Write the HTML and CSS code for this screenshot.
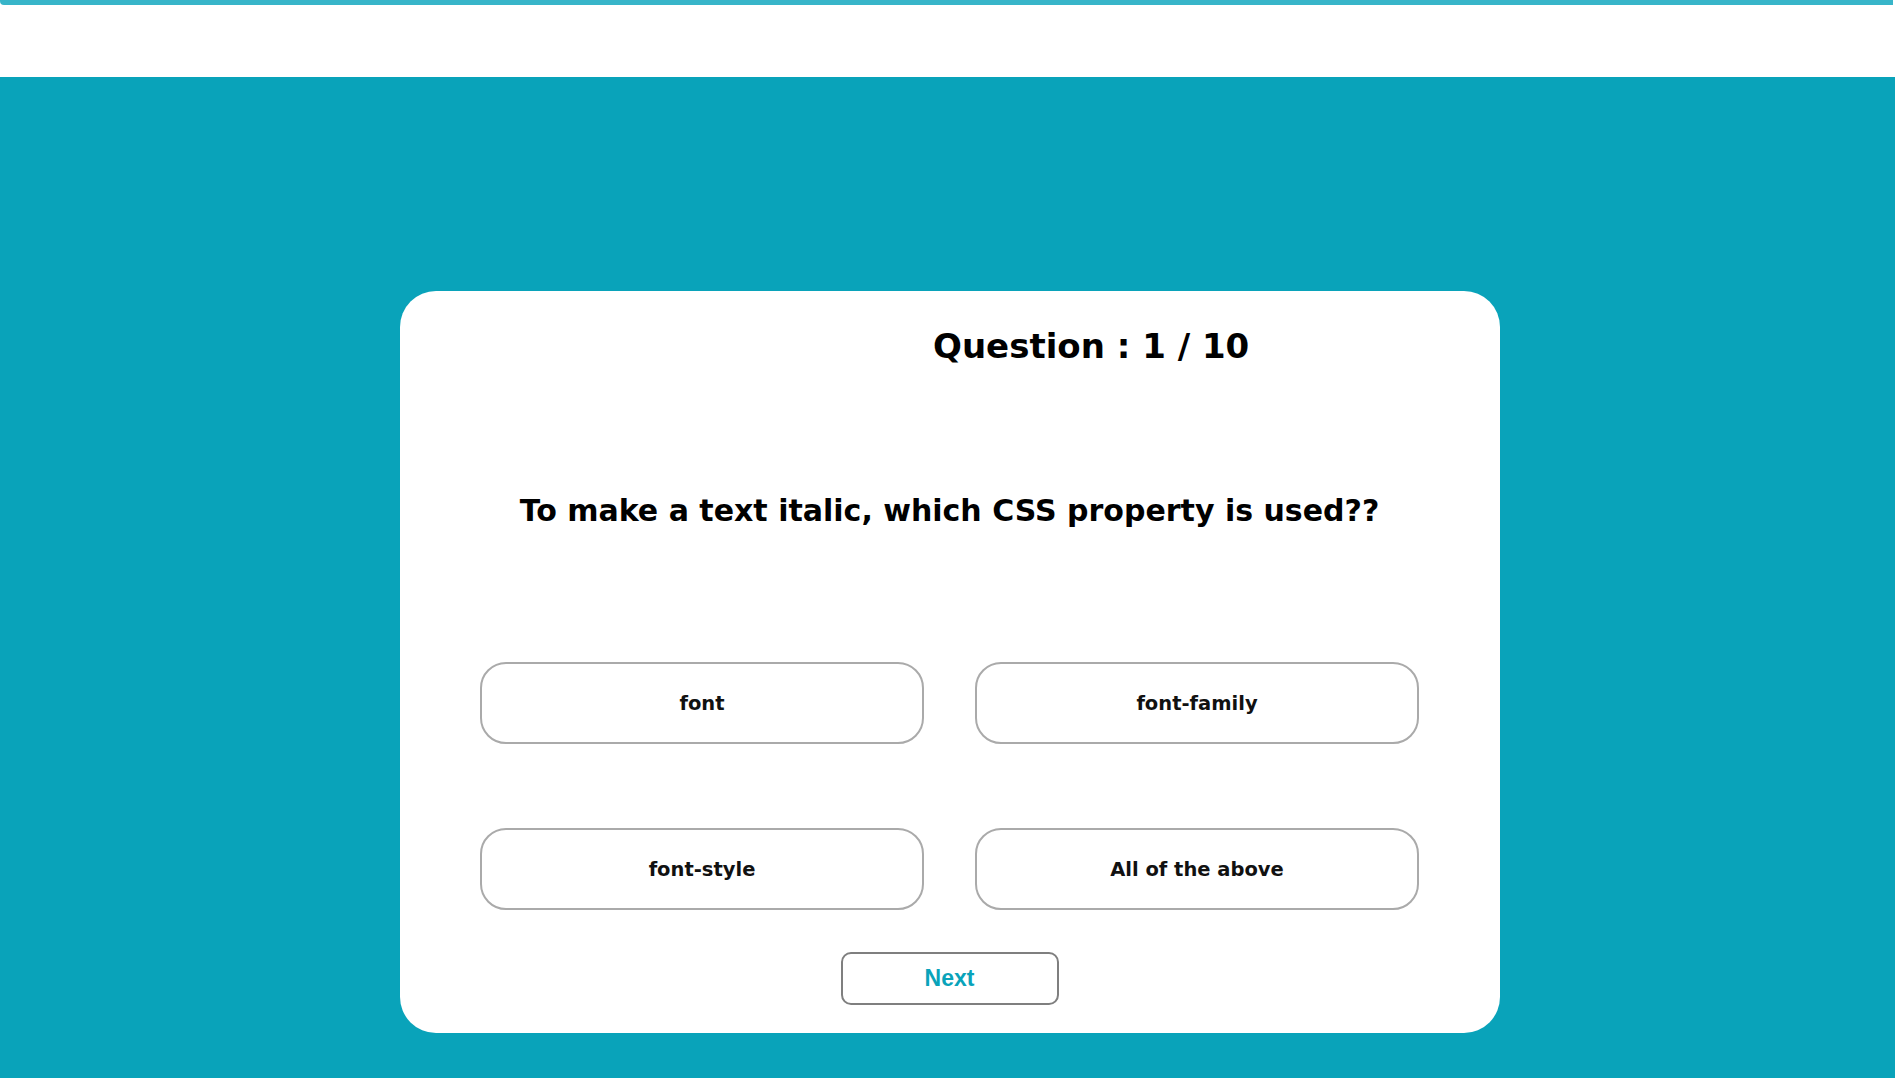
FILE: index.html
```html
<!DOCTYPE html>
<html lang="en">
<head>
<meta charset="utf-8">
<title>Quiz</title>
<link rel="stylesheet" href="styles.css">
</head>
<body>
<header class="header">
  <div class="progress"></div>
</header>
<main class="stage">
  <section class="card">
    <h2 class="counter">Question : 1 / 10</h2>
    <h1 class="question">To make a text italic, which CSS property is used??</h1>
    <div class="options">
      <button class="option">font</button>
      <button class="option">font-family</button>
      <button class="option">font-style</button>
      <button class="option">All of the above</button>
    </div>
    <div class="actions">
      <button class="next">Next</button>
    </div>
  </section>
</main>
</body>
</html>
```
FILE: styles.css
```css
html, body {
  margin: 0;
  padding: 0;
}
body {
  background: #09a3ba;
  font-family: "DejaVu Sans", Verdana, sans-serif;
  min-height: 1078px;
}
.header {
  height: 77px;
  background: #ffffff;
}
.progress {
  height: 5px;
  width: calc(100% - 2px);
  background: #38b5c9;
  border-bottom-left-radius: 4px;
}
.stage {
  padding-top: 214px;
  padding-left: 5px;
  display: flex;
  justify-content: center;
}
.card {
  width: 1100px;
  height: 742px;
  box-sizing: border-box;
  background: #ffffff;
  border-radius: 36px;
  padding: 35px 81px 28px 80px;
  display: flex;
  flex-direction: column;
}
.counter {
  margin: 0;
  font-size: 34px;
  line-height: 40px;
  font-weight: bold;
  color: #000;
  text-align: left;
  padding-left: 453px;
}
.question {
  margin: 127px 0 0;
  font-size: 30px;
  line-height: 36px;
  font-weight: bold;
  color: #000;
  text-align: center;
}
.options {
  margin-top: 133px;
  display: grid;
  grid-template-columns: 1fr 1fr;
  grid-auto-rows: 82px;
  column-gap: 51px;
  row-gap: 84px;
}
.option {
  font-family: "DejaVu Sans", Verdana, sans-serif;
  font-size: 19.5px;
  font-weight: bold;
  color: #111;
  background: #fff;
  border: 2px solid #aaaaaa;
  border-radius: 26px;
  padding: 0;
}
.actions {
  margin-top: 42px;
  display: flex;
  justify-content: center;
}
.next {
  width: 218px;
  height: 53px;
  background: #fff;
  border: 2px solid #7f7f7f;
  border-radius: 10px;
  font-family: "Liberation Sans", Arial, sans-serif;
  font-size: 23px;
  font-weight: bold;
  color: #09a3ba;
  padding: 0;
}
```
